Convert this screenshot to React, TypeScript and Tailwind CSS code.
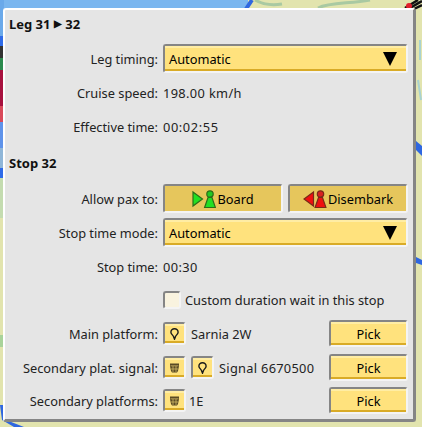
import React from "react";

function Arrow() {
  return (
    <svg width="14" height="14" viewBox="0 0 14 14" className="shrink-0">
      <path d="M0 0H14L7 14Z" fill="#000" />
    </svg>
  );
}

function Bevel({
  className = "",
  active = false,
  children,
}: {
  className?: string;
  active?: boolean;
  children?: React.ReactNode;
}) {
  return (
    <div
      className={
        "rounded-[3px] border-2 border-t-[#858585] border-l-[#858585] border-r-[#f4f4f4] border-b-[#f4f4f4] " +
        className
      }
    >
      {active ? (
        <div className="flex h-full w-full items-center justify-center bg-[#e6c65c]">{children}</div>
      ) : (
        <div className="flex h-full w-full items-center border-t-2 border-b-2 border-t-[#ffeda4] border-b-[#d9ab27] bg-[#ffe27d]">
          {children}
        </div>
      )}
    </div>
  );
}

function Select() {
  return (
    <Bevel className="h-[29px] w-[245px]">
      <div className="flex w-full items-center justify-between pl-[4px] pr-[9px] text-black">
        <span className="pt-[2px]">Automatic</span>
        <Arrow />
      </div>
    </Bevel>
  );
}

function Row({
  label,
  className = "",
  children,
}: {
  label: string;
  className?: string;
  children?: React.ReactNode;
}) {
  return (
    <div className={"flex items-center " + className}>
      <div className="w-[149px] shrink-0 pt-[2px] text-right text-[#222]">{label}</div>
      <div className="ml-[5px] flex min-w-0 flex-1 items-center">{children}</div>
    </div>
  );
}

function PlatformIcon() {
  return (
    <svg width="9" height="12" viewBox="0 0 9 12">
      <path d="M4.5 0.8C2.3 0.8 0.9 2.4 0.9 4.2 0.9 6 2.7 6.9 3.4 8.3L4.5 11.2 5.6 8.3C6.3 6.9 8.1 6 8.1 4.2 8.1 2.4 6.7 0.8 4.5 0.8Z" fill="none" stroke="#1a1a1a" strokeWidth="1.4" />
    </svg>
  );
}

function TrainIcon() {
  return (
    <svg width="9" height="10" viewBox="0 0 9 10">
      <path d="M0 0.5H9V3L8 8 7 9.5H2L1 8 0 3Z" fill="#5a4a24" />
      <path d="M0.5 2.8H8.5M1 6H8M3 3V9M6 3V9" stroke="#e0c56e" strokeWidth="0.7" fill="none" />
    </svg>
  );
}

function IconButton({ icon }: { icon: "pin" | "train" }) {
  return (
    <Bevel className="h-[23px] w-[23px] shrink-0">
      <div className="flex w-full items-center justify-center">
        {icon === "pin" ? <PlatformIcon /> : <TrainIcon />}
      </div>
    </Bevel>
  );
}

function Pick() {
  return (
    <Bevel className="h-[27px] w-[79px] shrink-0">
      <div className="w-full pt-[2px] text-center text-black">Pick</div>
    </Bevel>
  );
}

export default function App() {
  return (
    <div className="relative h-[427px] w-[422px] overflow-hidden bg-[#e2e4ae] font-['Noto_Sans',sans-serif] text-[12.8px]">
      {/* map behind the window */}
      <svg className="absolute inset-0" width="422" height="427" viewBox="0 0 422 427">
        <rect width="248" height="9" fill="#7ab6ef" />
        <rect y="0" width="4" height="45" fill="#6aa9ea" />
        <path d="M246 9L252 0" stroke="#2f67e0" strokeWidth="4" />
        <rect x="0" y="36" width="3" height="10" fill="#2f6be8" />
        <rect x="0" y="46" width="3" height="12" fill="#333" />
        <rect x="0" y="58" width="3" height="12" fill="#2c8a4e" />
        <rect x="0" y="70" width="3" height="36" fill="#a8123f" />
        <rect x="0" y="106" width="3" height="16" fill="#d94a5a" />
        <rect x="0" y="122" width="3" height="26" fill="#5f93ea" />
        <rect x="0" y="148" width="3" height="20" fill="#8fb6d8" />
        <rect x="0" y="168" width="3" height="10" fill="#2f6be8" />
        <rect x="0" y="178" width="3" height="40" fill="#c4dcb0" />
        <path d="M0 405L2 420 14 427H24L6 420 3 405Z" fill="#2f67e0" />
        <rect x="0" y="335" width="3" height="12" fill="#a9d39a" />
        <path d="M416 141L422 146V156L416 150Z" fill="#2f67e0" />
        <path d="M416 257L422 260V265L416 263Z" fill="#2f67e0" />
        <path d="M405 8L418 0M410 8L422 1M414 9L422 5" stroke="#111" strokeWidth="2.5" />
        <circle cx="409" cy="6" r="3" fill="#e0202c" />
        <path d="M255 0C262 4 270 6 282 4M318 8C330 2 350 4 370 0" stroke="#a9c9a2" strokeWidth="3" fill="none" />
        <path d="M420 40V60M418 80L421 100" stroke="#a8d2d0" strokeWidth="2" fill="none" />
      </svg>

      <div className="relative ml-[3px] mt-[8px] h-[414px] w-[413px] rounded-[3px] border-t-2 border-l-2 border-r-[3px] border-b-[3px] border-t-white border-l-white border-r-[#858585] border-b-[#858585] bg-[#e5e5e5] text-[#222]">
        <div className="pl-[4px] pt-[5px]">
          <div className="flex h-[19px] items-center whitespace-pre text-[13px] font-bold text-[#111]">
            Leg 31 <span className="text-[9.5px]">▶</span> 32
          </div>
          <Row label="Leg timing:" className="mt-[10px] h-[29px]">
            <Select />
          </Row>
          <Row label="Cruise speed:" className="mt-[10px] h-[19px]">
            <span className="pt-[2px] tracking-[0.36px]">198.00 km/h</span>
          </Row>
          <Row label="Effective time:" className="mt-[15px] h-[19px]">
            <span className="pt-[2px] tracking-[0.6px]">00:02:55</span>
          </Row>
          <div className="mt-[18px] flex h-[19px] items-center text-[13px] font-bold text-[#111]">Stop 32</div>
          <Row label="Allow pax to:" className="mt-[11px] h-[29px]">
            <div className="flex gap-[5px]">
              <Bevel active className="h-[29px] w-[120px]">
                <svg width="24" height="20" viewBox="0 0 24 20" className="mr-[1px]">
                  <path d="M1 3L10.5 10 1 17Z" fill="#22e022" stroke="#2c6e18" strokeWidth="1.2" />
                  <circle cx="18" cy="5" r="3.2" fill="#22c922" stroke="#2c6e18" strokeWidth="1.2" />
                  <path d="M16 8.5H20L23.4 18.5H12.6Z" fill="#22e022" stroke="#2c6e18" strokeWidth="1.2" />
                </svg>
                <span className="pt-[2px] text-black">Board</span>
              </Bevel>
              <Bevel active className="h-[29px] w-[120px]">
                <svg width="24" height="20" viewBox="0 0 24 20" className="mr-[1px]">
                  <path d="M10.5 3L1 10 10.5 17Z" fill="#f01010" stroke="#7a2a18" strokeWidth="1.2" />
                  <circle cx="17.5" cy="5" r="3.2" fill="#d92020" stroke="#7a2a18" strokeWidth="1.2" />
                  <path d="M15.5 8.5H19.5L22.9 18.5H12.1Z" fill="#f01010" stroke="#7a2a18" strokeWidth="1.2" />
                </svg>
                <span className="pt-[2px] text-black">Disembark</span>
              </Bevel>
            </div>
          </Row>
          <Row label="Stop time mode:" className="mt-[5px] h-[29px]">
            <Select />
          </Row>
          <Row label="Stop time:" className="mt-[10px] h-[19px]">
            <span className="pt-[2px] tracking-[0.4px]">00:30</span>
          </Row>
          <Row label="" className="mt-[15px] h-[18px]">
            <div className="h-[18px] w-[18px] rounded-[3px] border-2 border-t-[#858585] border-l-[#858585] border-r-[#f4f4f4] border-b-[#f4f4f4] bg-[#f9f3df]" />
            <span className="ml-[4px] whitespace-nowrap pt-[2px]">Custom duration wait in this stop</span>
          </Row>
          <Row label="Main platform:" className="mt-[11px] h-[27px]">
            <IconButton icon="pin" />
            <span className="ml-[5px] pt-[2px]">Sarnia 2W</span>
            <div className="ml-auto mr-[5px]">
              <Pick />
            </div>
          </Row>
          <Row label="Secondary plat. signal:" className="mt-[7px] h-[27px]">
            <IconButton icon="train" />
            <div className="ml-[5px]">
              <IconButton icon="pin" />
            </div>
            <span className="ml-[5px] pt-[2px] tracking-[0.3px]">Signal 6670500</span>
            <div className="ml-auto mr-[5px]">
              <Pick />
            </div>
          </Row>
          <Row label="Secondary platforms:" className="mt-[6px] h-[27px]">
            <IconButton icon="train" />
            <span className="ml-[3px] pt-[2px]">1E</span>
            <div className="ml-auto mr-[5px]">
              <Pick />
            </div>
          </Row>
        </div>
      </div>
    </div>
  );
}
